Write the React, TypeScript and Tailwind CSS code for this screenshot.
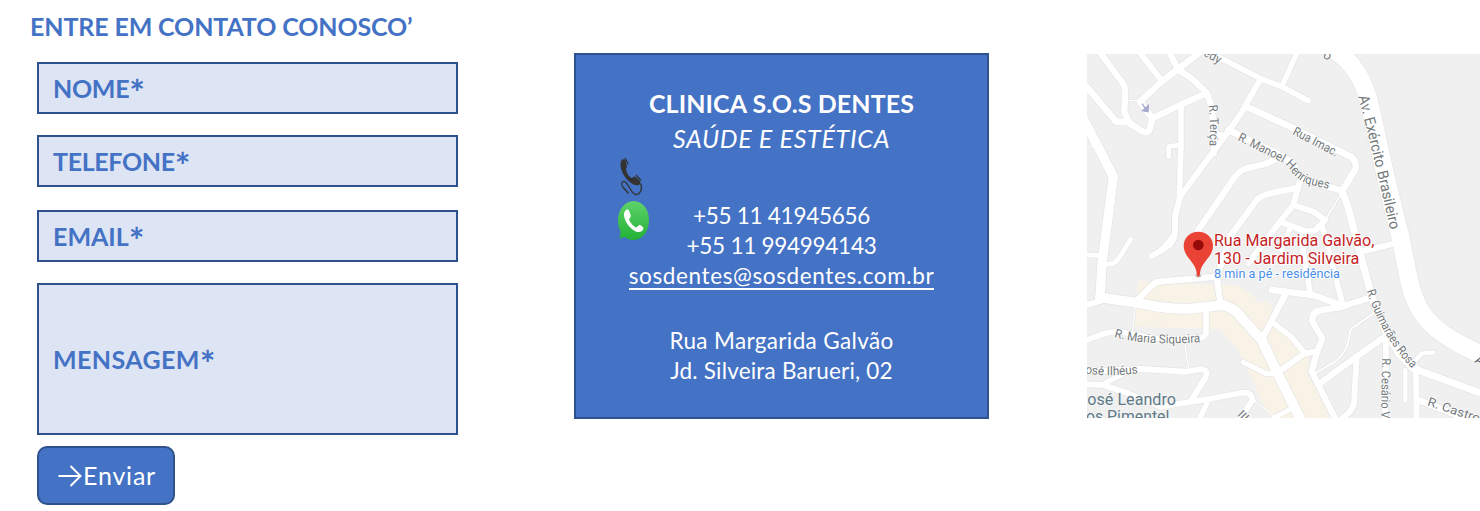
import React from "react";

type Road = { d: string; w: number };

const roads: Road[] = [
  { d: "M20 110 L108 215 L145 217 L185 243 Q205 253 210 235 L217 205 L180 155 L245 95 L375 -5", w: 20 },
  { d: "M50 -5 L125 95 Q138 110 135 135 L133 185 L147 217", w: 19 },
  { d: "M165 -10 L245 92", w: 18 },
  { d: "M262 -5 L295 60 L335 85 L380 128 L395 170 L402 250 L430 258", w: 19 },
  { d: "M402 240 L402 310", w: 18 },
  { d: "M217 205 L300 165 L378 130", w: 19 },
  { d: "M303 165 L303 285 L298 440", w: 17 },
  { d: "M298 285 L266 290 L266 320", w: 14 },
  { d: "M135 152 L180 152", w: 3 },
  { d: "M10 205 L100 380 L66 640 L60 745", w: 28 },
  { d: "M18 299 L40 285", w: 4 },
  { d: "M540 90 L480 195 L430 265 L300 440 L285 500 L285 550 Q280 580 262 590 L215 618", w: 18 },
  { d: "M375 0 L540 85 L605 110 L685 152", w: 17 },
  { d: "M605 110 L655 0", w: 16 },
  { d: "M500 170 L620 225 L815 322 Q833 340 826 358 L785 425", w: 20 },
  { d: "M445 240 L600 315 L640 340 Q650 375 670 388 L785 422", w: 20 },
  { d: "M785 422 Q800 450 822 540 L875 740 L920 850 L960 915 L1000 955 L1220 1036", w: 22 },
  { d: "M355 540 L465 380 Q480 362 500 355 L555 342 L605 320", w: 19 },
  { d: "M410 680 L430 625 L450 560 L530 450 Q540 440 570 430 L645 415", w: 19 },
  { d: "M660 390 L640 465 L600 515 L505 640", w: 18 },
  { d: "M640 465 L700 485 L735 510 L705 542 L680 545 L600 515", w: 18 },
  { d: "M788 425 L735 510", w: 5 },
  { d: "M727 530 L790 770", w: 17 },
  { d: "M660 550 L692 738", w: 17 },
  { d: "M630 535 L605 600", w: 15 },
  { d: "M575 720 L700 735 L790 768 L875 742", w: 19 },
  { d: "M850 603 L945 580", w: 18 },
  { d: "M615 735 L545 870", w: 19 },
  { d: "M790 770 L725 780 Q695 785 697 815 L727 865 L710 910 L695 965 L770 1115", w: 19 },
  { d: "M580 820 L635 862 L675 910 L710 905", w: 17 },
  { d: "M675 910 L600 962", w: 18 },
  { d: "M10 768 L70 750", w: 18 },
  { d: "M60 742 L180 760 Q260 778 330 776 L430 765 Q460 775 475 792 L545 870 L600 985 L665 1115", w: 30 },
  { d: "M172 750 L215 708 Q225 696 240 695 L410 680 L422 765", w: 19 },
  { d: "M378 780 L378 850 Q375 862 355 865 L220 865 L120 845 Q90 843 60 855 L15 872", w: 17 },
  { d: "M165 770 L158 840", w: 4 },
  { d: "M315 880 L325 955", w: 4 },
  { d: "M10 614 L60 616", w: 14 },
  { d: "M70 645 L100 640 Q110 635 120 620 L152 568", w: 14 },
  { d: "M215 618 L240 605 L285 550", w: 14 },
  { d: "M15 965 L180 957 L320 965 L360 958 Q385 955 378 980 L335 1050", w: 18 },
  { d: "M10 1003 L70 1005 L150 1032 L240 1070 L400 1045 L485 1028 Q515 1025 518 1050 L475 1115", w: 17 },
  { d: "M65 1005 L150 960", w: 15 },
  { d: "M385 1050 L355 1115", w: 16 },
  { d: "M520 1050 L590 1105", w: 4 },
  { d: "M48 1050 L60 1110", w: 3 },
  { d: "M580 1105 L630 1078", w: 15 },
  { d: "M490 937 L560 972 L592 968", w: 15 },
  { d: "M880 790 L812 838 L802 885 Q790 915 765 935 L705 970", w: 6 },
  { d: "M720 1000 L830 920 L915 860", w: 19 },
  { d: "M830 920 L822 1060 Q818 1085 780 1110", w: 18 },
  { d: "M918 860 L915 1115", w: 18 },
  { d: "M1008 955 L1010 1115", w: 18 },
  { d: "M976 960 L976 1052", w: 13 },
  { d: "M1003 960 L1003 935 L1025 910 L1060 908", w: 13 },
  { d: "M1015 1050 L1130 1095 L1200 1120", w: 20 },
  { d: "M745 -15 L795 25 Q850 75 872 175 C905 330 925 420 962 565 L985 680 C1010 795 1050 850 1230 925", w: 54 },
];

const labels = [
  { id: "dy", d: "M369 16 L440 55", t: "edy", n: 54 },
  { id: "terca", d: "M386 166 Q394 230 386 310", t: "R. Terça", n: 122 },
  { id: "manoel", d: "M472 270 L600 334 Q622 345 634 364 Q650 388 680 401 L770 423 L790 428", t: "R. Manoel Henriques", n: 316 },
  { id: "imac", d: "M636 252 L790 332", t: "Rua Imac.", n: 148 },
  { id: "guima", d: "M860 723 Q890 815 935 880 Q960 920 1010 970", t: "R. Guimarães Rosa", n: 272 },
  { id: "cesario", d: "M906 925 L903 1120", t: "R. Cesário V", n: 180 },
  { id: "castro", d: "M1040 1066 L1220 1126", t: "R. Castro", n: 164 },
  { id: "maria", d: "M102 861 Q200 890 380 875", t: "R. Maria Siqueira", n: 261 },
  { id: "ilheus", d: "M15 970 Q80 982 190 968", t: "osé Ilhéus", n: 160 },
];

function MapView() {
  return (
    <svg className="mt-[54px] ml-[98px] h-[364px] w-[393px] shrink-0" viewBox="21 12 1179 1092" fontFamily="Roboto, sans-serif">
      <rect x="21" y="12" width="1179" height="1092" fill="#f0f0f0" />
      <path
        d="M175 692 L400 705 L470 705 L515 735 L540 760 L560 754 L582 778 L580 820 L640 870 L690 915 L680 970 L765 1110 L570 1110 L512 980 L475 900 L420 838 L160 830 L168 760Z"
        fill="#f9f3e7"
      />
      <g fill="none" strokeLinecap="round" strokeLinejoin="round">
        {roads.map((r, i) => (
          <path key={i} d={r.d} stroke="#e4e4e4" strokeWidth={r.w + 4} />
        ))}
        {roads.map((r, i) => (
          <path key={i} d={r.d} stroke="#ffffff" strokeWidth={r.w} />
        ))}
      </g>
      <path d="M186 161 L196 175 M205 167 L204 185 L188 182 Z" stroke="#a5a9cc" strokeWidth="4" fill="#a5a9cc" />
      <g fontSize="37" fill="#73797b" stroke="#ffffff" strokeWidth="4" strokeLinejoin="round" paintOrder="stroke">
        {labels.map((l) => (
          <g key={l.id}>
            <path id={l.id} d={l.d} fill="none" stroke="none" />
            <text textLength={l.n} lengthAdjust="spacingAndGlyphs">
              <textPath href={"#" + l.id} textLength={l.n} lengthAdjust="spacingAndGlyphs">{l.t}</textPath>
            </text>
          </g>
        ))}
        <path id="avenue" d="M835 140 Q880 310 934 555" fill="none" stroke="none" />
        <text fontSize="45" textLength="412" lengthAdjust="spacingAndGlyphs">
          <textPath href="#avenue" textLength="412" lengthAdjust="spacingAndGlyphs">Av. Exército Brasileiro</textPath>
        </text>
        <text fontSize="40" transform="translate(726 20) rotate(35)">o</text>
        <text fontSize="40" fill="#5f6567" transform="translate(1182 936) rotate(30)">A</text>
        <text transform="translate(470 1096) rotate(45)">III</text>
      </g>
      <g fill="#607a88" stroke="#f4f4f4" strokeWidth="5" paintOrder="stroke" fontSize="48">
        <text x="22" y="1064" textLength="266" lengthAdjust="spacingAndGlyphs">osé Leandro</text>
        <text x="18" y="1117" textLength="250" lengthAdjust="spacingAndGlyphs">os Pimentel</text>
      </g>
      <ellipse cx="355" cy="677" rx="9" ry="5" fill="#bdbdbd" />
      <path d="M355 681 C351 681 350 672 349 664 C345 636 311 620 311 588 A44 43 0 0 1 399 588 C399 620 365 636 361 664 C360 672 359 681 355 681Z" fill="#ea4335" />
      <circle cx="355" cy="585" r="16" fill="#960a0a" />
      <g stroke="#ffffff" strokeWidth="6" strokeLinejoin="round" paintOrder="stroke">
        <g fontSize="49" fill="#c5221f">
          <text x="402" y="588" textLength="481" lengthAdjust="spacingAndGlyphs">Rua Margarida Galvão,</text>
          <text x="402" y="641" textLength="436" lengthAdjust="spacingAndGlyphs">130 - Jardim Silveira</text>
        </g>
        <text x="402" y="683" fontSize="38" fill="#4a8de8" textLength="378" lengthAdjust="spacingAndGlyphs">8 min a pé - residência</text>
      </g>
    </svg>
  );
}

function PhoneIcon() {
  return (
    <svg className="absolute top-[102px] left-[43px] h-[40px] w-[26px]" viewBox="0 0 26 40" fill="none">
      <path d="M4 2.200 C0.800 3 1 9 3 14.500 C6 22 12.500 28 18 28.300 C21 28.300 22 26 21 24 L16 19.500 C14.500 19 14 21 12.500 21 C9.500 19.500 7 14.500 7 11.500 L8 10 L6.500 2.500 Z" fill="#333333" />
      <path d="M6 1 L9.300 7.500 M17 18 L22 23.500" stroke="#333333" strokeWidth="1.300" />
      <path d="M21.500 26.500 C24 31 21.500 37.500 16.500 37.500 C12.500 36.500 10 28.500 6.500 25 C3.500 23 1.500 26.500 3.500 29.500 L9.500 36.500" stroke="#333333" strokeWidth="1.300" />
    </svg>
  );
}

function WhatsAppIcon() {
  return (
    <svg className="absolute top-[144px] left-[41px] h-[41px] w-[33px]" viewBox="0 0 33 41">
      <defs>
        <linearGradient id="wa" x1="0" y1="0" x2="0" y2="1">
          <stop offset="0" stopColor="#5fd36b" />
          <stop offset="1" stopColor="#22b135" />
        </linearGradient>
      </defs>
      <path d="M16.500 2 C25.500 2 32 10.500 32 21 C32 32 25.500 41 16.500 41 C13 41 10 40 8 38 L2.500 39.500 L3.800 32.500 C2 29.500 1 26 1 21.500 C1 10.500 8 2 16.500 2Z" fill="url(#wa)" />
      <path d="M9 11 C10 10.500 11.500 10.300 12 11.500 L13.800 16.500 C14 18 12.500 19 12 20.500 C13.500 24 16 27 19 28.500 C20.500 28.200 21.500 25.500 23 25.800 L26 28 C27 29 26 31 25 32 C22.500 33.800 19 33.300 15.500 30.500 C11 27 7.500 21 7 16.500 C6.800 14 7.500 12 9 11Z" fill="#ffffff" />
    </svg>
  );
}

function Field({ label, className }: { label: string; className: string }) {
  return (
    <div
      className={
        "flex items-center border-2 border-[#2f528f] bg-[#dde4f4] pt-[2px] pl-[14px] text-[25px] font-bold text-[#4472c4] " +
        className
      }
    >
      <span>{label}</span>
      <span className="h-[30px] text-[37px] leading-[35px]">*</span>
    </div>
  );
}

export default function App() {
  return (
    <main className="flex h-[511px] w-[1480px] items-start overflow-hidden bg-white font-[Lato,sans-serif]">
      <form className="w-[458px] shrink-0 pl-[37px]" onSubmit={(e) => e.preventDefault()}>
        <h1 className="-ml-[7px] pt-[11px] text-[25px] leading-[30px] font-bold tracking-[-0.13px] whitespace-nowrap text-[#4472c4]">
          ENTRE EM CONTATO CONOSCO’
        </h1>
        <Field label="NOME" className="mt-[21px] h-[52px] tracking-[-0.3px]" />
        <Field label="TELEFONE" className="mt-[21px] h-[52px] tracking-[-0.35px]" />
        <Field label="EMAIL" className="mt-[23px] h-[52px]" />
        <Field label="MENSAGEM" className="mt-[21px] h-[152px] pb-[1px] tracking-[0.4px]" />
        <button className="mt-[11px] flex h-[59px] w-[138px] items-center rounded-[10px] border-2 border-[#2f528f] bg-[#4472c4] pl-[19px] text-[25px] tracking-[0.8px] text-white">
          <svg className="h-[22px] w-[25px]" viewBox="0 0 25 22" fill="none" stroke="currentColor" strokeWidth="2">
            <path d="M0.500 11 H23 M12.500 1 L22.500 11 L12.500 21" />
          </svg>
          <span>Enviar</span>
        </button>
      </form>

      <section className="relative mt-[53px] ml-[116px] h-[366px] w-[415px] shrink-0 border-2 border-[#2f528f] bg-[#4472c4] pt-[31px] text-center text-[22.500px] leading-[30px] whitespace-nowrap text-white">
        <h2 className="text-[25px] leading-[35px] font-bold tracking-[0.1px]">CLINICA S.O.S DENTES</h2>
        <p className="text-[25px] leading-[35px] tracking-[0.7px] italic">SAÚDE E ESTÉTICA</p>
        <PhoneIcon />
        <WhatsAppIcon />
        <p className="mt-[45px] tracking-[-0.27px]">+55 11 41945656</p>
        <p className="tracking-[-0.27px]">+55 11 994994143</p>
        <p className="tracking-[0.62px]">
          <span className="inline-block h-[29px] border-b-2 border-white align-top">sosdentes@sosdentes.com.br</span>
        </p>
        <p className="mt-[35px] tracking-[0.36px]">Rua Margarida Galvão</p>
        <p className="tracking-[0.2px]">Jd. Silveira Barueri, 02</p>
      </section>

      <MapView />
    </main>
  );
}
